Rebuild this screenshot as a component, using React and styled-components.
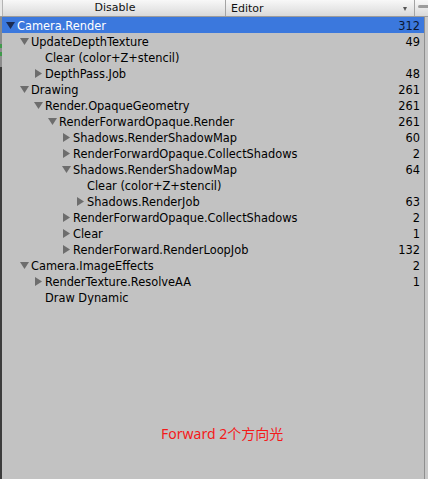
import React from "react";
import styled, { createGlobalStyle } from "styled-components";

const Global = createGlobalStyle`
  html, body { margin: 0; padding: 0; background: #c2c2c2; }
  #root { width: 428px; height: 479px; }
`;

const Frame = styled.div`
  width: 428px;
  height: 479px;
  display: flex;
  flex-direction: column;
  overflow: hidden;
  font-family: "DejaVu Sans", Verdana, sans-serif;
  font-size: 11.4px;
  color: #000;
  background: #c2c2c2;
`;

const Toolbar = styled.div`
  flex: none;
  display: flex;
  align-items: stretch;
  background: linear-gradient(#f8f8f8, #e6e6e6 60%, #d9d9d9);
  border-bottom: 1px solid #9b9b9b;
  box-sizing: border-box;
  height: 17px;
  font-size: 11px;
`;

const ToolEdge = styled.div`
  width: 2px;
  border-right: 1px solid #b4b4b4;
  background: #e8e8e8;
`;

const ToolButton = styled.div`
  width: 223px;
  display: flex;
  align-items: center;
  justify-content: center;
  border-right: 1px solid #a4a4a4;
  color: #111;
  line-height: 16px;
  padding-left: 2px;
  box-sizing: border-box;
`;

const Dropdown = styled.div`
  flex: 1;
  display: flex;
  align-items: center;
  justify-content: space-between;
  padding: 0 7px 0 5px;
  border-right: 1px solid #a4a4a4;
  color: #111;
`;

const DropArrow = styled.span`
  width: 0;
  height: 0;
  border-left: 2.5px solid transparent;
  border-right: 2.5px solid transparent;
  border-top: 4px solid #555;
  margin-top: 1px;
`;

const ToolTail = styled.div`
  width: 13px;
  display: flex;
  align-items: flex-start;
  padding-top: 5px;
  padding-left: 3px;
  box-sizing: border-box;
`;

const TailBar = styled.div`
  flex: 1;
  height: 3px;
  border-radius: 2px 0 0 2px;
  background: #9c9c9c;
`;

const Body = styled.div`
  flex: 1;
  display: flex;
  min-height: 0;
`;

const LeftStrip = styled.div`
  width: 2px;
  flex: none;
  background: linear-gradient(
    #8c8c8c 0px,
    #8c8c8c 27px,
    #3f9a4a 27px,
    #3f9a4a 31px,
    #8c8c8c 31px,
    #8c8c8c 35px,
    #3f9a4a 35px,
    #3f9a4a 39px,
    #8c8c8c 39px,
    #8c8c8c 50px,
    #3c3c3c 50px
  );
`;

const Tree = styled.div`
  flex: 1;
  display: flex;
  flex-direction: column;
  border-right: 1px solid #8f8f8f;
`;

const RightStrip = styled.div`
  width: 3px;
  flex: none;
  background: #c8c8c8;
`;

const Row = styled.div`
  height: 16px;
  flex: none;
  display: flex;
  align-items: flex-start;
  padding-left: ${(p) => 2 + p.$level * 14}px;
  padding-right: 4px;
  background: ${(p) => (p.$selected ? "#3b78dd" : "transparent")};
  color: ${(p) => (p.$selected ? "#fff" : "#000")};
  white-space: nowrap;
`;

const ArrowBox = styled.span`
  width: 13px;
  height: 16px;
  flex: none;
  display: flex;
  align-items: center;
  justify-content: center;
`;

const Label = styled.span`
  flex: 1;
  line-height: 16px;
  margin-top: 1px;
`;

const Count = styled.span`
  line-height: 16px;
  margin-top: 1px;
  color: ${(p) => (p.$selected ? "#0b1630" : "#000")};
`;

const Spacer = styled.div`
  flex: 1;
`;

const Caption = styled.div`
  padding-left: 159px;
  padding-bottom: 36px;
  height: 18px;
  line-height: 18px;
  font-family: "Noto Sans", "Noto Sans CJK SC", sans-serif;
  font-size: 14px;
  color: #f41a1a;
`;

function Arrow({ state, selected }) {
  const fill = selected ? "#1b2b52" : "#6d6d6d";
  if (state === "open") {
    return (
      <svg width="9" height="7" viewBox="0 0 9 7">
        <polygon points="0,0 9,0 4.5,7" fill={fill} />
      </svg>
    );
  }
  if (state === "closed") {
    return (
      <svg width="7" height="9" viewBox="0 0 7 9">
        <polygon points="0,0 7,4.5 0,9" fill={fill} />
      </svg>
    );
  }
  return null;
}

const rows = [
  { l: 0, t: "Camera.Render", n: "312", s: "open", sel: true },
  { l: 1, t: "UpdateDepthTexture", n: "49", s: "open" },
  { l: 2, t: "Clear (color+Z+stencil)", n: "" },
  { l: 2, t: "DepthPass.Job", n: "48", s: "closed" },
  { l: 1, t: "Drawing", n: "261", s: "open" },
  { l: 2, t: "Render.OpaqueGeometry", n: "261", s: "open" },
  { l: 3, t: "RenderForwardOpaque.Render", n: "261", s: "open" },
  { l: 4, t: "Shadows.RenderShadowMap", n: "60", s: "closed" },
  { l: 4, t: "RenderForwardOpaque.CollectShadows", n: "2", s: "closed" },
  { l: 4, t: "Shadows.RenderShadowMap", n: "64", s: "open" },
  { l: 5, t: "Clear (color+Z+stencil)", n: "" },
  { l: 5, t: "Shadows.RenderJob", n: "63", s: "closed" },
  { l: 4, t: "RenderForwardOpaque.CollectShadows", n: "2", s: "closed" },
  { l: 4, t: "Clear", n: "1", s: "closed" },
  { l: 4, t: "RenderForward.RenderLoopJob", n: "132", s: "closed" },
  { l: 1, t: "Camera.ImageEffects", n: "2", s: "open" },
  { l: 2, t: "RenderTexture.ResolveAA", n: "1", s: "closed" },
  { l: 2, t: "Draw Dynamic", n: "" },
];

export default function App() {
  return (
    <>
      <Global />
      <Frame>
        <Toolbar>
          <ToolEdge />
          <ToolButton>Disable</ToolButton>
          <Dropdown>
            <span>Editor</span>
            <DropArrow />
          </Dropdown>
          <ToolTail>
            <TailBar />
          </ToolTail>
        </Toolbar>
        <Body>
          <LeftStrip />
          <Tree>
            {rows.map((r, i) => (
              <Row key={i} $level={r.l} $selected={r.sel}>
                <ArrowBox>
                  <Arrow state={r.s} selected={r.sel} />
                </ArrowBox>
                <Label>{r.t}</Label>
                <Count $selected={r.sel}>{r.n}</Count>
              </Row>
            ))}
            <Spacer />
            <Caption>Forward 2个方向光</Caption>
          </Tree>
          <RightStrip />
        </Body>
      </Frame>
    </>
  );
}
